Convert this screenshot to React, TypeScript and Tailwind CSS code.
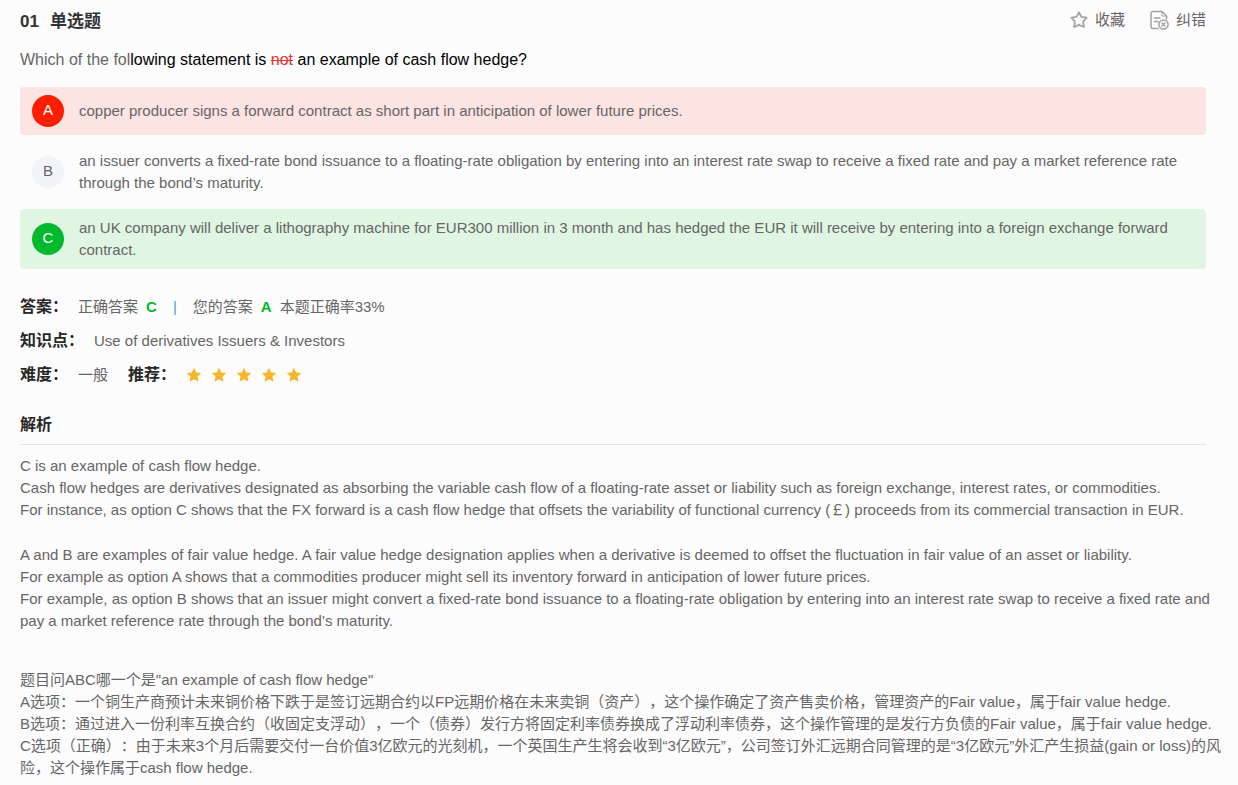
import type { ReactNode } from 'react';

type OptionState = 'wrong' | 'idle' | 'correct';

interface OptionProps {
  letter: string;
  state: OptionState;
  children: ReactNode;
}

const rowStyles: Record<OptionState, string> = {
  wrong: 'bg-[#fce4e2]',
  idle: '',
  correct: 'bg-[#e0f5e2]'
};

const badgeStyles: Record<OptionState, string> = {
  wrong: 'bg-[#ff1e00] text-white',
  idle: 'bg-[#f2f4f7] text-[#666]',
  correct: 'bg-[#00b92f] text-white'
};

function Option({ letter, state, children }: OptionProps) {
  return (
    <li>
      <button
        type="button"
        className={`flex w-full items-center gap-[15px] rounded px-3 py-2 text-left ${rowStyles[state]}`}
      >
        <span
          className={`flex size-8 shrink-0 items-center justify-center rounded-full pb-0.5 ${badgeStyles[state]}`}
        >
          {letter}
        </span>
        <span>{children}</span>
      </button>
    </li>
  );
}

function StarOutline() {
  return (
    <svg viewBox="0 0 18 18" className="size-[18px]" fill="none" stroke="#a3a3a3" strokeWidth="1.8" strokeLinejoin="round">
      <path d="M9 1.3 L11.4 5.9 L16.600 6.7 L13.2 10.5 L13.900 16 L9 13.900 L4.100 16 L4.800 10.500 L1.400 6.700 L6.600 5.900 Z" />
    </svg>
  );
}

function ReportIcon() {
  return (
    <svg viewBox="0 0 20 20" className="size-5" fill="none" stroke="#a3a3a3" strokeWidth="1.5" strokeLinecap="round" strokeLinejoin="round">
      <path d="M9 18.500 H4 A2 2 0 0 1 2 16.500 V3.500 A2 2 0 0 1 4 1.500 H13 L17.500 6 V9" />
      <path d="M13 2 V6 H17" strokeWidth="1" />
      <path d="M5.500 8 H11 M5.500 11.500 H9" />
      <circle cx="14.500" cy="14.500" r="4.600" />
      <path d="M13 13 L16 16 M16 13 L13 16" />
    </svg>
  );
}

function RatingStar() {
  return (
    <svg viewBox="0 0 16 16" className="size-4" fill="#f7b52c">
      <path d="M8 0.800 L10.200 5.500 L15.300 6.100 L11.500 9.600 L12.500 14.700 L8 12.200 L3.500 14.700 L4.500 9.600 L0.700 6.100 L5.800 5.500 Z" />
    </svg>
  );
}

function Label({ children }: { children: ReactNode }) {
  return <dt className="text-base font-bold text-[#282828]">{children}</dt>;
}

export default function App() {
  return (
    <main className="min-h-screen bg-[#fcfcfc] pl-5 pr-8 pt-2 font-['Liberation_Sans','Noto_Sans_CJK_SC',sans-serif] text-[15px] leading-[22px] text-[#666] [text-spacing-trim:space-all]">
      <header className="flex h-7 items-center justify-between">
        <h1 className="flex gap-[11px] text-[17px] font-bold text-[#333]">
          <span>01</span>
          <span>单选题</span>
        </h1>
        <div className="flex items-center gap-6 pb-1">
          <button type="button" className="flex items-center gap-[7px]">
            <StarOutline />
            收藏
          </button>
          <button type="button" className="flex items-center gap-[7px]">
            <ReportIcon />
            纠错
          </button>
        </div>
      </header>

      <p className="mt-3 text-base leading-6">
        Which of the fol<span className="text-black">lowing statement is </span>
        <del className="text-[#e53333]">not</del>
        <span className="text-black"> an example of cash flow hedge?</span>
      </p>

      <ul className="mt-[15px] space-y-[7px]">
        <Option letter="A" state="wrong">
          copper producer signs a forward contract as short part in anticipation of lower future prices.
        </Option>
        <Option letter="B" state="idle">
          an issuer converts a fixed-rate bond issuance to a floating-rate obligation by entering into an interest rate
          swap to receive a fixed rate and pay a market reference rate through the bond’s maturity.
        </Option>
        <Option letter="C" state="correct">
          an UK company will deliver a lithography machine for EUR300 million in 3 month and has hedged the EUR it will
          receive by entering into a foreign exchange forward contract.
        </Option>
      </ul>

      {/* Result summary */}
      <dl className="mt-[26px] space-y-2.5">
        <div className="flex items-center gap-2.5">
          <Label>答案：</Label>
          <dd className="flex gap-2">
            <span>正确答案</span>
            <b className="text-[#00b92f]">C</b>
            <span className="px-2 text-[#5b9bd5]">|</span>
            <span>您的答案</span>
            <b className="text-[#00b92f]">A</b>
            <span>本题正确率33%</span>
          </dd>
        </div>
        <div className="flex items-center gap-2.5">
          <Label>知识点：</Label>
          <dd>Use of derivatives Issuers &amp; Investors</dd>
        </div>
        <div className="flex items-center gap-2.5">
          <Label>难度：</Label>
          <dd className="mr-2.5">一般</dd>
          <Label>推荐：</Label>
          <dd className="flex items-center gap-[9px]">
            <RatingStar />
            <RatingStar />
            <RatingStar />
            <RatingStar />
            <RatingStar />
          </dd>
        </div>
      </dl>

      {/* Explanation */}
      <section className="mt-[26px]">
        <h2 className="border-b border-[#e0e3ed] pb-[7px] text-base font-bold text-[#282828]">解析</h2>
        <div className="mt-2.5 -mr-6">
          <p>
            C is an example of cash flow hedge.
            <br />
            Cash flow hedges are derivatives designated as absorbing the variable cash flow of a floating-rate asset or
            liability such as foreign exchange, interest rates, or commodities.
            <br />
            For instance, as option C shows that the FX forward is a cash flow hedge that offsets the variability of
            functional currency (￡) proceeds from its commercial transaction in EUR.
          </p>
          <p className="mt-[23px]">
            A and B are examples of fair value hedge. A fair value hedge designation applies when a derivative is deemed
            to offset the fluctuation in fair value of an asset or liability.
            <br />
            For example as option A shows that a commodities producer might sell its inventory forward in anticipation of
            lower future prices.
            <br />
            For example, as option B shows that an issuer might convert a fixed-rate bond issuance to a floating-rate
            obligation by entering into an interest rate swap to receive a fixed rate and pay a market reference rate
            through the bond’s maturity.
          </p>
          <p className="mt-[37px]">
            题目问ABC哪一个是"an example of cash flow hedge"
            <br />
            A选项：一个铜生产商预计未来铜价格下跌于是签订远期合约以FP远期价格在未来卖铜（资产），这个操作确定了资产售卖价格，管理资产的Fair value，属于fair value hedge.
            <br />
            B选项：通过进入一份利率互换合约（收固定支浮动），一个（债券）发行方将固定利率债券换成了浮动利率债券，这个操作管理的是发行方负债的Fair value，属于fair value hedge.
            <br />
            C选项（正确）：由于未来3个月后需要交付一台价值3亿欧元的光刻机，一个英国生产生将会收到“3亿欧元”，公司签订外汇远期合同管理的是“3亿欧元”外汇产生损益(gain or loss)的风险，这个操作属于cash flow hedge.
          </p>
        </div>
      </section>
    </main>
  );
}
